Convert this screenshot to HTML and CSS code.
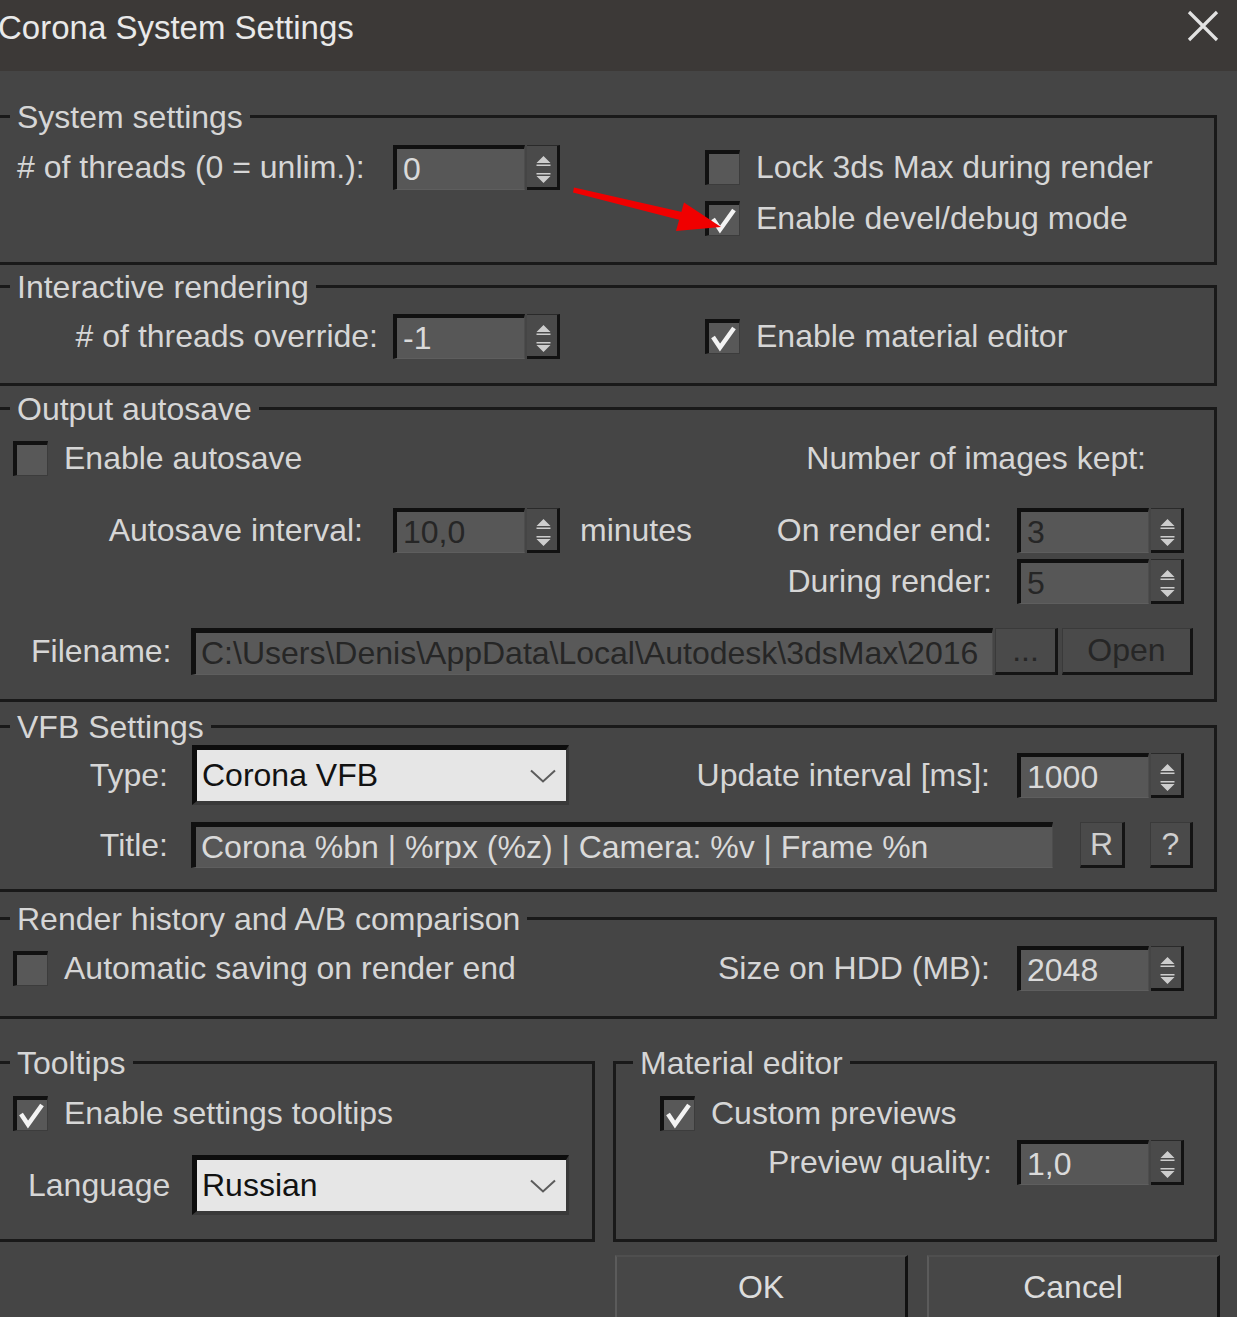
FILE: index.html
```html
<!DOCTYPE html>
<html lang="en">
<head>
<meta charset="utf-8">
<title>Corona System Settings</title>
<link rel="stylesheet" href="styles.css">
</head>
<body>
<header class="titlebar">
  <span class="title">Corona System Settings</span>
  <svg class="close" width="32" height="32" viewBox="0 0 32 32" aria-label="Close"><path d="M2 2 L30 30 M30 2 L2 30"/></svg>
</header>

<main class="content">
  <section class="group g-system">
    <div class="legend">System settings</div>
    <div class="row-top">
      <div class="left-part row">
        <span class="lbl lbl-a lbl-left">&#35; of threads (0 = unlim.):</span>
        <div class="spin"><div class="field spin-field">0</div><div class="spin-btns"><svg width="30" height="41" viewBox="0 0 30 41"><path d="M9.5 17 L16.5 10 L23.5 17 Z M9.5 18.5h14v1.5h-14z M9.5 27h14v1.5h-14z M9.5 30 L16.5 37 L23.5 30 Z"/></svg></div></div>
      </div>
      <div class="col-checks">
        <div class="check row"><span class="chk"></span><span>Lock 3ds Max during render</span></div>
        <div class="check row"><span class="chk"><svg width="30" height="30" viewBox="0 0 30 30"><polyline points="4,14 11,24.5 25,5"/></svg></span><span>Enable devel/debug mode</span></div>
      </div>
    </div>
  </section>

  <section class="group g-interactive">
    <div class="legend">Interactive rendering</div>
    <div class="row row-first">
      <div class="left-part">
        <span class="lbl lbl-a lbl-right">&#35; of threads override:</span>
        <div class="spin"><div class="field spin-field">-1</div><div class="spin-btns"><svg width="30" height="41" viewBox="0 0 30 41"><path d="M9.5 17 L16.5 10 L23.5 17 Z M9.5 18.5h14v1.5h-14z M9.5 27h14v1.5h-14z M9.5 30 L16.5 37 L23.5 30 Z"/></svg></div></div>
      </div>
      <div class="check"><span class="chk"><svg width="30" height="30" viewBox="0 0 30 30"><polyline points="4,14 11,24.5 25,5"/></svg></span><span>Enable material editor</span></div>
    </div>
  </section>

  <section class="group g-autosave">
    <div class="legend">Output autosave</div>
    <div class="row row-first">
      <div class="left-part">
        <div class="check"><span class="chk"></span><span>Enable autosave</span></div>
      </div>
      <span class="kept">Number of images kept:</span>
    </div>
    <div class="row row-interval">
      <div class="left-part">
        <span class="lbl lbl-a lbl-right lbl-interval">Autosave interval:</span>
        <div class="spin"><div class="field spin-field dim">10,0</div><div class="spin-btns"><svg width="30" height="41" viewBox="0 0 30 41"><path d="M9.5 17 L16.5 10 L23.5 17 Z M9.5 18.5h14v1.5h-14z M9.5 27h14v1.5h-14z M9.5 30 L16.5 37 L23.5 30 Z"/></svg></div></div>
        <span class="unit">minutes</span>
      </div>
      <span class="lbl rlbl">On render end:</span>
      <div class="spin"><div class="field spin-field dim">3</div><div class="spin-btns"><svg width="30" height="41" viewBox="0 0 30 41"><path d="M9.5 17 L16.5 10 L23.5 17 Z M9.5 18.5h14v1.5h-14z M9.5 27h14v1.5h-14z M9.5 30 L16.5 37 L23.5 30 Z"/></svg></div></div>
    </div>
    <div class="row row-during">
      <div class="left-part"></div>
      <span class="lbl rlbl">During render:</span>
      <div class="spin"><div class="field spin-field dim">5</div><div class="spin-btns"><svg width="30" height="41" viewBox="0 0 30 41"><path d="M9.5 17 L16.5 10 L23.5 17 Z M9.5 18.5h14v1.5h-14z M9.5 27h14v1.5h-14z M9.5 30 L16.5 37 L23.5 30 Z"/></svg></div></div>
    </div>
    <div class="row row-file">
      <span class="lbl lbl-file">Filename:</span>
      <div class="field wide-field file-field dim">C:\Users\Denis\AppData\Local\Autodesk\3dsMax\2016</div>
      <div class="btn btn-dots dim">...</div>
      <div class="btn btn-open dim">Open</div>
    </div>
  </section>

  <section class="group g-vfb">
    <div class="legend">VFB Settings</div>
    <div class="row row-type">
      <span class="lbl lbl-b">Type:</span>
      <div class="combo"><span>Corona VFB</span><svg width="26" height="14" viewBox="0 0 26 14"><polyline points="1,1.5 13,12.5 25,1.5"/></svg></div>
      <span class="lbl rlbl-wide">Update interval [ms]:</span>
      <div class="spin"><div class="field spin-field">1000</div><div class="spin-btns"><svg width="30" height="41" viewBox="0 0 30 41"><path d="M9.5 17 L16.5 10 L23.5 17 Z M9.5 18.5h14v1.5h-14z M9.5 27h14v1.5h-14z M9.5 30 L16.5 37 L23.5 30 Z"/></svg></div></div>
    </div>
    <div class="row row-title">
      <span class="lbl lbl-b lbl-title">Title:</span>
      <div class="field wide-field title-field">Corona %bn | %rpx (%z) | Camera: %v | Frame %n</div>
      <div class="btn btn-r">R</div>
      <div class="btn btn-q">?</div>
    </div>
  </section>

  <section class="group g-history">
    <div class="legend">Render history and A/B comparison</div>
    <div class="row row-first">
      <div class="left-part">
        <div class="check"><span class="chk"></span><span>Automatic saving on render end</span></div>
      </div>
      <span class="lbl rlbl rlbl-hdd">Size on HDD (MB):</span>
      <div class="spin"><div class="field spin-field">2048</div><div class="spin-btns"><svg width="30" height="41" viewBox="0 0 30 41"><path d="M9.5 17 L16.5 10 L23.5 17 Z M9.5 18.5h14v1.5h-14z M9.5 27h14v1.5h-14z M9.5 30 L16.5 37 L23.5 30 Z"/></svg></div></div>
    </div>
  </section>

  <div class="bottom-groups">
    <section class="group g-tooltips">
      <div class="legend">Tooltips</div>
      <div class="row row-first row-tt">
        <div class="check"><span class="chk"><svg width="30" height="30" viewBox="0 0 30 30"><polyline points="4,14 11,24.5 25,5"/></svg></span><span>Enable settings tooltips</span></div>
      </div>
      <div class="row row-lang">
        <span class="lbl lbl-lang">Language</span>
        <div class="combo"><span>Russian</span><svg width="26" height="14" viewBox="0 0 26 14"><polyline points="1,1.5 13,12.5 25,1.5"/></svg></div>
      </div>
    </section>
    <section class="group g-mated">
      <div class="legend legend-mated">Material editor</div>
      <div class="row row-first row-tt">
        <div class="check"><span class="chk"><svg width="30" height="30" viewBox="0 0 30 30"><polyline points="4,14 11,24.5 25,5"/></svg></span><span>Custom previews</span></div>
      </div>
      <div class="row row-quality">
        <span class="lbl lbl-quality">Preview quality:</span>
        <div class="spin"><div class="field spin-field">1,0</div><div class="spin-btns"><svg width="30" height="41" viewBox="0 0 30 41"><path d="M9.5 17 L16.5 10 L23.5 17 Z M9.5 18.5h14v1.5h-14z M9.5 27h14v1.5h-14z M9.5 30 L16.5 37 L23.5 30 Z"/></svg></div></div>
      </div>
    </section>
  </div>

  <div class="buttons">
    <div class="dlg-btn btn-ok">OK</div>
    <div class="dlg-btn btn-cancel">Cancel</div>
  </div>
</main>

<svg class="arrow" width="1237" height="1317" viewBox="0 0 1237 1317" aria-hidden="true">
  <polygon points="574,187.5 573,192.5 680,220 682,212"/>
  <polygon points="721,227 684,202.5 676,231"/>
</svg>
</body>
</html>
```

FILE: styles.css
```css
* { box-sizing: border-box; }

html, body {
  margin: 0;
  padding: 0;
  width: 1237px;
  height: 1317px;
  overflow: hidden;
  background: #454545;
}

body {
  font-family: "Liberation Sans", Arial, sans-serif;
  font-size: 32px;
  color: #d6d6d6;
  position: relative;
}

/* Title bar */
.titlebar {
  height: 71px;
  background: #3c3937;
  display: flex;
  align-items: flex-start;
  justify-content: space-between;
  padding-right: 18px;
}
.title {
  font-size: 33px;
  line-height: 40px;
  margin-top: 8px;
  margin-left: -2px;
  color: #e9e9e9;
}
.close {
  margin-top: 10px;
}
.close path {
  stroke: #e2e2e2;
  stroke-width: 3.2;
  fill: none;
}

/* Main content */
.content {
  display: flex;
  flex-direction: column;
}

.group {
  border: 3px solid #191919;
  margin: 0 20px 0 -10px;
  padding-left: 20px;
}
.legend {
  width: max-content;
  height: 34px;
  line-height: 34px;
  margin: -18px 0 0 -3px;
  padding: 0 7px;
  background: #454545;
  color: #d6d6d6;
}

.g-system { margin-top: 44px; height: 150px; }
.g-interactive { margin-top: 20px; height: 101px; }
.g-autosave { margin-top: 21px; height: 295px; }
.g-vfb { margin-top: 23px; height: 167px; }
.g-history { margin-top: 25px; height: 102px; }

.row {
  display: flex;
  align-items: center;
  height: 45px;
  white-space: nowrap;
}
.row-first { margin-top: 10px; }

.row-top {
  display: flex;
  align-items: flex-start;
  margin-top: 11px;
}
.left-part {
  width: 692px;
  flex-shrink: 0;
  display: flex;
  align-items: center;
}
.col-checks {
  display: flex;
  flex-direction: column;
  gap: 6px;
}

.lbl { white-space: nowrap; }
.lbl-a { width: 380px; }
.lbl-left { padding-left: 4px; }
.lbl-right { text-align: right; padding-right: 15px; }
.lbl-interval { padding-right: 30px; }
.unit { margin-left: 20px; }

.rlbl { width: 312px; text-align: right; padding-right: 25px; }
.rlbl-hdd { padding-right: 27px; }
.rlbl-wide { width: 448px; text-align: right; padding-right: 27px; }

.kept { width: 441px; text-align: right; }

/* Checkbox */
.check {
  display: flex;
  align-items: center;
  gap: 16px;
}
.chk {
  width: 35px;
  height: 35px;
  flex-shrink: 0;
  background: #585858;
  border-top: 4px solid #111;
  border-left: 4px solid #111;
  border-right: 1px solid #3c3c3c;
  border-bottom: 1px solid #3c3c3c;
  display: block;
}
.chk svg { display: block; }
.chk polyline {
  fill: none;
  stroke: #f3f3f3;
  stroke-width: 4.5;
  stroke-linejoin: miter;
}

/* Fields and spinners */
.field {
  background: #575757;
  border-top: 4px solid #101010;
  border-left: 4px solid #101010;
  border-right: 1px solid #4d4d4d;
  border-bottom: 1px solid #5e5e5e;
  padding-left: 6px;
  white-space: nowrap;
  overflow: hidden;
  color: #dadada;
}
.dim { color: #262626; }

.spin {
  display: flex;
  height: 45px;
  flex-shrink: 0;
}
.spin-field {
  width: 132px;
  height: 45px;
  line-height: 40px;
}
.spin-btns {
  width: 33px;
  height: 45px;
  margin-left: 2px;
  background: #4a4a4a;
  border-top: 1px solid #2a2a2a;
  border-right: 3px solid #121212;
  border-bottom: 3px solid #121212;
}
.spin-btns svg { display: block; }
.spin-btns path { fill: #cdcdcd; }

.wide-field {
  border-top-width: 5px;
  border-left-width: 5px;
  padding-left: 5px;
  line-height: 40px;
}
.row-interval { margin-top: 27px; }
.row-during { margin-top: 6px; }
.row-file { margin-top: 24px; height: 47px; }
.lbl-file { width: 178px; padding-left: 18px; }
.file-field { width: 802px; height: 47px; background: #595959; }

.btn {
  height: 47px;
  line-height: 42px;
  text-align: center;
  background: #4a4a4a;
  border-top: 1px solid #3a3a3a;
  border-left: 1px solid #3a3a3a;
  border-right: 3px solid #141414;
  border-bottom: 3px solid #141414;
  color: #cfcfcf;
}
.btn.dim { color: #262626; }
.btn-dots { width: 63px; margin-left: 2px; }
.btn-open { width: 131px; margin-left: 4px; }

/* VFB */
.row-type { margin-top: 1px; height: 60px; }
.lbl-b { width: 179px; text-align: right; padding-right: 24px; }
.combo {
  width: 377px;
  height: 60px;
  flex-shrink: 0;
  background: #e6e6e6;
  border-top: 5px solid #0d0d0d;
  border-left: 5px solid #0d0d0d;
  border-right: 3px solid #393939;
  border-bottom: 4px solid #393939;
  color: #121212;
  display: flex;
  align-items: center;
  justify-content: space-between;
  padding: 0 10px 0 5px;
}
.combo polyline {
  fill: none;
  stroke: #5c5c5c;
  stroke-width: 2;
}
.row-title { margin-top: 17px; height: 46px; }
.lbl-title { width: 178px; padding-right: 23px; }
.title-field { width: 862px; height: 46px; }
.btn-r { width: 45px; height: 46px; margin-left: 27px; }
.btn-q { width: 43px; height: 46px; margin-left: 25px; }

/* Bottom groups */
.bottom-groups {
  display: flex;
  margin-top: 42px;
  gap: 18px;
}
.bottom-groups .group {
  margin: 0;
  height: 181px;
}
.g-tooltips { width: 605px; margin-left: -10px !important; }
.g-mated { width: 604px; padding-left: 44px; }
.legend-mated { margin-left: -27px; }
.row-tt { margin-top: 11px; }
.row-lang { margin-top: 19px; height: 60px; }
.lbl-lang { width: 179px; padding-left: 15px; }
.row-quality { margin-top: 4px; }
.lbl-quality { width: 357px; text-align: right; padding-right: 25px; }

/* Dialog buttons */
.buttons {
  display: flex;
  margin-top: 13px;
  padding-left: 615px;
  gap: 19px;
}
.dlg-btn {
  width: 293px;
  height: 80px;
  background: #474747;
  border-left: 2px solid #5b5b5b;
  border-top: 2px solid #4f4f4f;
  border-right: 3px solid #111;
  text-align: center;
  line-height: 60px;
  color: #dcdcdc;
}

/* Red annotation arrow (overlay) */
.arrow {
  position: absolute;
  left: 0;
  top: 0;
  pointer-events: none;
}
.arrow polygon { fill: #f00000; }
```
